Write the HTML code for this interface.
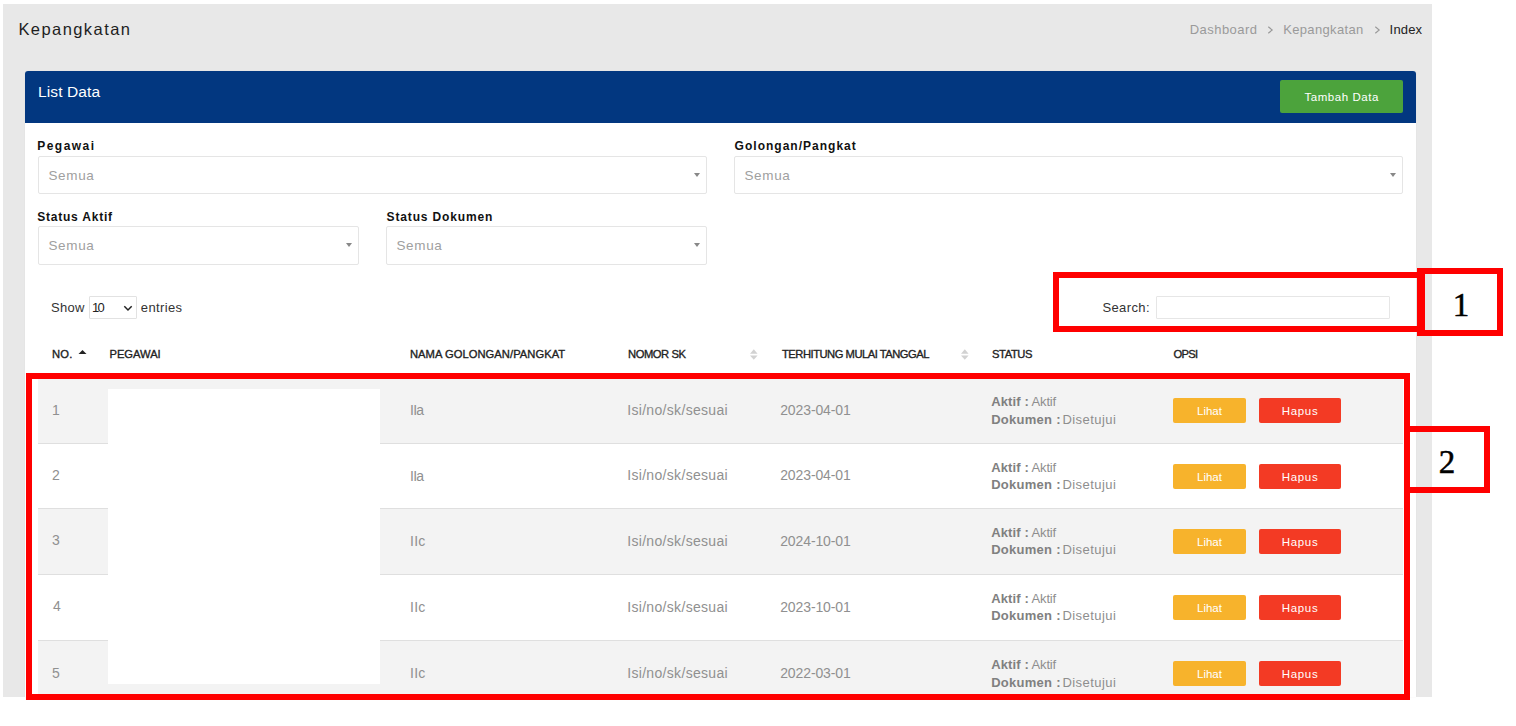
<!DOCTYPE html>
<html><head><meta charset="utf-8">
<style>
*{box-sizing:border-box;margin:0;padding:0}
html,body{width:1516px;height:726px;overflow:hidden;background:#fff;font-family:"Liberation Sans",sans-serif}
.a{position:absolute}
.t{position:absolute;white-space:nowrap;line-height:20px}
</style></head><body>
<div class="a" style="left:3px;top:4px;width:1429px;height:693px;background:#e8e8e8"></div>
<div id="title" class="t" style="left:18.40px;top:19.00px;font-size:16.5px;color:#1e1e1e;letter-spacing:1.430px;">Kepangkatan</div>
<div id="bc1" class="t" style="left:1189.80px;top:20.00px;font-size:13px;color:#9a9a9a;letter-spacing:0.438px;">Dashboard</div>
<div id="bc2" class="t" style="left:1283.20px;top:20.00px;font-size:13px;color:#9a9a9a;letter-spacing:0.340px;">Kepangkatan</div>
<div id="bc3" class="t" style="left:1389.60px;top:20.00px;font-size:13px;color:#222;letter-spacing:0.175px;">Index</div>
<svg class="a" style="left:1266.5px;top:25px" width="8" height="10" viewBox="0 0 8 10"><polyline points="1.3,1.8 5.2,5 1.3,8.2" fill="none" stroke="#999" stroke-width="1.1"/></svg>
<svg class="a" style="left:1373.8px;top:25px" width="8" height="10" viewBox="0 0 8 10"><polyline points="1.3,1.8 5.2,5 1.3,8.2" fill="none" stroke="#999" stroke-width="1.1"/></svg>
<div class="a" style="left:25px;top:71px;width:1391px;height:626px;background:#fff;border-radius:3px 3px 0 0;box-shadow:0 0 1px rgba(0,0,0,0.12)"></div>
<div class="a" style="left:25px;top:71px;width:1391px;height:52px;background:#023780;border-radius:3px 3px 0 0"></div>
<div id="listdata" class="t" style="left:38.00px;top:82.00px;font-size:15.5px;color:#fff;letter-spacing:0.125px;">List Data</div>
<div class="a" style="left:1280px;top:80px;width:123px;height:33px;background:#4ca33c;border-radius:2px"></div>
<div id="tambah" class="t" style="left:1304.40px;top:87.00px;font-size:11.5px;color:#fff;letter-spacing:0.560px;">Tambah Data</div>
<div id="lbl_peg" class="t" style="left:37.20px;top:136.00px;font-size:12px;color:#111;letter-spacing:1.483px;font-weight:bold;">Pegawai</div>
<div id="lbl_gol" class="t" style="left:734.60px;top:136.00px;font-size:12px;color:#111;letter-spacing:1.013px;font-weight:bold;">Golongan/Pangkat</div>
<div id="lbl_sa" class="t" style="left:37.20px;top:207.00px;font-size:12px;color:#111;letter-spacing:0.782px;font-weight:bold;">Status Aktif</div>
<div id="lbl_sd" class="t" style="left:386.60px;top:207.00px;font-size:12px;color:#111;letter-spacing:0.846px;font-weight:bold;">Status Dokumen</div>
<div class="a" style="left:38px;top:156px;width:669px;height:38px;border:1px solid #e5e5e5;border-radius:2px;background:#fff"></div>
<div id="semua0" class="t" style="left:48.40px;top:166.00px;font-size:13.5px;color:#a0a0a0;letter-spacing:0.675px;">Semua</div>
<div class="a" style="left:693.5px;top:172.5px;width:0;height:0;border-style:solid;border-width:4px 3.5px 0 3.5px;border-color:#888 transparent transparent transparent"></div>
<div class="a" style="left:734px;top:156px;width:669px;height:38px;border:1px solid #e5e5e5;border-radius:2px;background:#fff"></div>
<div id="semua1" class="t" style="left:744.40px;top:166.00px;font-size:13.5px;color:#a0a0a0;letter-spacing:0.675px;">Semua</div>
<div class="a" style="left:1389.5px;top:172.5px;width:0;height:0;border-style:solid;border-width:4px 3.5px 0 3.5px;border-color:#888 transparent transparent transparent"></div>
<div class="a" style="left:38px;top:226px;width:321px;height:39px;border:1px solid #e5e5e5;border-radius:2px;background:#fff"></div>
<div id="semua2" class="t" style="left:48.40px;top:236.00px;font-size:13.5px;color:#a0a0a0;letter-spacing:0.675px;">Semua</div>
<div class="a" style="left:345.5px;top:242.5px;width:0;height:0;border-style:solid;border-width:4px 3.5px 0 3.5px;border-color:#888 transparent transparent transparent"></div>
<div class="a" style="left:386px;top:226px;width:321px;height:39px;border:1px solid #e5e5e5;border-radius:2px;background:#fff"></div>
<div id="semua3" class="t" style="left:396.40px;top:236.00px;font-size:13.5px;color:#a0a0a0;letter-spacing:0.675px;">Semua</div>
<div class="a" style="left:693.5px;top:242.5px;width:0;height:0;border-style:solid;border-width:4px 3.5px 0 3.5px;border-color:#888 transparent transparent transparent"></div>
<div id="show" class="t" style="left:51.00px;top:298.00px;font-size:13px;color:#333;letter-spacing:0.267px;">Show</div>
<div class="a" style="left:89px;top:296px;width:48px;height:23px;border:1px solid #e2e2e2;border-radius:1px;background:#fff"></div>
<div id="ten" class="t" style="left:92.00px;top:298.00px;font-size:13px;color:#222;letter-spacing:-1.700px;">10</div>
<svg class="a" style="left:123px;top:305px" width="10" height="7" viewBox="0 0 10 7"><polyline points="1.3,1.3 5,5 8.7,1.3" fill="none" stroke="#222" stroke-width="1.5"/></svg>
<div id="entries" class="t" style="left:140.80px;top:298.00px;font-size:13px;color:#333;letter-spacing:0.383px;">entries</div>
<div id="search" class="t" style="left:1102.40px;top:298.00px;font-size:13px;color:#333;letter-spacing:0.383px;">Search:</div>
<div class="a" style="left:1156px;top:296px;width:234px;height:23px;border:1px solid #e6e6e6;border-radius:1px;background:#fff"></div>
<div id="h_no" class="t" style="left:52.00px;top:344.00px;font-size:11.2px;color:#222;letter-spacing:0.200px;-webkit-text-stroke:0.35px #222">NO.</div>
<div id="h_peg" class="t" style="left:109.50px;top:344.00px;font-size:11.2px;color:#222;letter-spacing:-0.033px;-webkit-text-stroke:0.35px #222">PEGAWAI</div>
<div id="h_gol" class="t" style="left:410.00px;top:344.00px;font-size:11.2px;color:#222;letter-spacing:0.040px;-webkit-text-stroke:0.35px #222">NAMA GOLONGAN/PANGKAT</div>
<div id="h_sk" class="t" style="left:628.00px;top:344.00px;font-size:11.2px;color:#222;letter-spacing:-0.429px;-webkit-text-stroke:0.35px #222">NOMOR SK</div>
<div id="h_tgl" class="t" style="left:782.00px;top:344.00px;font-size:11.2px;color:#222;letter-spacing:-0.482px;-webkit-text-stroke:0.35px #222">TERHITUNG MULAI TANGGAL</div>
<div id="h_st" class="t" style="left:992.00px;top:344.00px;font-size:11.2px;color:#222;letter-spacing:-0.400px;-webkit-text-stroke:0.35px #222">STATUS</div>
<div id="h_op" class="t" style="left:1173.50px;top:344.00px;font-size:11.2px;color:#222;letter-spacing:-0.667px;-webkit-text-stroke:0.35px #222">OPSI</div>
<svg class="a" style="left:78px;top:349px" width="10" height="6" viewBox="0 0 10 6"><polygon points="0.5,5 4.5,1 8.5,5" fill="#222"/></svg>
<svg class="a" style="left:749.5px;top:349px" width="8" height="11" viewBox="0 0 8 11"><polygon points="0,4.8 3.8,0.2 7.6,4.8" fill="#d2d2d2"/><polygon points="0,6.4 3.8,10.8 7.6,6.4" fill="#d2d2d2"/></svg>
<svg class="a" style="left:960.5px;top:349px" width="8" height="11" viewBox="0 0 8 11"><polygon points="0,4.8 3.8,0.2 7.6,4.8" fill="#d2d2d2"/><polygon points="0,6.4 3.8,10.8 7.6,6.4" fill="#d2d2d2"/></svg>
<div class="a" style="left:0;top:0;width:1516px;height:697px;overflow:hidden">
<div class="a" style="left:38px;top:378px;width:1365px;height:65px;background:#f3f3f3"></div>
<div id="r0_no" class="t" style="left:52.00px;top:400.00px;font-size:14px;color:#909090;letter-spacing:0.000px;">1</div>
<div id="r0_gol" class="t" style="left:410.00px;top:400.00px;font-size:14px;color:#909090;letter-spacing:-0.750px;">IIa</div>
<div id="r0_sk" class="t" style="left:627.20px;top:400.00px;font-size:14px;color:#909090;letter-spacing:0.320px;">Isi/no/sk/sesuai</div>
<div id="r0_dt" class="t" style="left:780.20px;top:400.00px;font-size:14px;color:#909090;letter-spacing:-0.111px;">2023-04-01</div>
<div id="r0_a1" class="t" style="left:991.20px;top:392.00px;font-size:13px;color:#808080;letter-spacing:0.133px;font-weight:bold;">Aktif :</div>
<div id="r0_a2" class="t" style="left:1031.60px;top:392.00px;font-size:13px;color:#8e8e8e;letter-spacing:-0.175px;">Aktif</div>
<div id="r0_d1" class="t" style="left:991.20px;top:410.00px;font-size:13px;color:#808080;letter-spacing:0.263px;font-weight:bold;">Dokumen :</div>
<div id="r0_d2" class="t" style="left:1062.40px;top:410.00px;font-size:13px;color:#8e8e8e;letter-spacing:0.463px;">Disetujui</div>
<div class="a" style="left:1173px;top:398px;width:73px;height:25px;background:#f7b32c;border-radius:2px"></div>
<div class="a" style="left:1259px;top:398px;width:82px;height:25px;background:#f33a24;border-radius:2px"></div>
<div id="r0_lh" class="t" style="left:1197.00px;top:401.00px;font-size:11.5px;color:#fff;letter-spacing:0.000px;">Lihat</div>
<div id="r0_hp" class="t" style="left:1281.80px;top:401.00px;font-size:11.5px;color:#fff;letter-spacing:0.650px;">Hapus</div>
<div class="a" style="left:38px;top:443px;width:1365px;height:65px;background:#fff"></div>
<div class="a" style="left:38px;top:443px;width:1365px;height:1px;background:#dfdfdf"></div>
<div id="r1_no" class="t" style="left:52.00px;top:465.00px;font-size:14px;color:#909090;letter-spacing:0.000px;">2</div>
<div id="r1_gol" class="t" style="left:410.00px;top:466.00px;font-size:14px;color:#909090;letter-spacing:-0.750px;">IIa</div>
<div id="r1_sk" class="t" style="left:627.20px;top:465.00px;font-size:14px;color:#909090;letter-spacing:0.320px;">Isi/no/sk/sesuai</div>
<div id="r1_dt" class="t" style="left:780.20px;top:465.00px;font-size:14px;color:#909090;letter-spacing:-0.111px;">2023-04-01</div>
<div id="r1_a1" class="t" style="left:991.20px;top:458.00px;font-size:13px;color:#808080;letter-spacing:0.133px;font-weight:bold;">Aktif :</div>
<div id="r1_a2" class="t" style="left:1031.60px;top:458.00px;font-size:13px;color:#8e8e8e;letter-spacing:-0.175px;">Aktif</div>
<div id="r1_d1" class="t" style="left:991.20px;top:475.00px;font-size:13px;color:#808080;letter-spacing:0.263px;font-weight:bold;">Dokumen :</div>
<div id="r1_d2" class="t" style="left:1062.40px;top:475.00px;font-size:13px;color:#8e8e8e;letter-spacing:0.463px;">Disetujui</div>
<div class="a" style="left:1173px;top:464px;width:73px;height:25px;background:#f7b32c;border-radius:2px"></div>
<div class="a" style="left:1259px;top:464px;width:82px;height:25px;background:#f33a24;border-radius:2px"></div>
<div id="r1_lh" class="t" style="left:1197.00px;top:467.00px;font-size:11.5px;color:#fff;letter-spacing:0.000px;">Lihat</div>
<div id="r1_hp" class="t" style="left:1281.80px;top:467.00px;font-size:11.5px;color:#fff;letter-spacing:0.650px;">Hapus</div>
<div class="a" style="left:38px;top:508px;width:1365px;height:66px;background:#f3f3f3"></div>
<div class="a" style="left:38px;top:508px;width:1365px;height:1px;background:#dfdfdf"></div>
<div id="r2_no" class="t" style="left:52.00px;top:530.00px;font-size:14px;color:#909090;letter-spacing:0.000px;">3</div>
<div id="r2_gol" class="t" style="left:410.00px;top:531.00px;font-size:14px;color:#909090;letter-spacing:0.250px;">IIc</div>
<div id="r2_sk" class="t" style="left:627.20px;top:531.00px;font-size:14px;color:#909090;letter-spacing:0.320px;">Isi/no/sk/sesuai</div>
<div id="r2_dt" class="t" style="left:780.20px;top:531.00px;font-size:14px;color:#909090;letter-spacing:-0.111px;">2024-10-01</div>
<div id="r2_a1" class="t" style="left:991.20px;top:523.00px;font-size:13px;color:#808080;letter-spacing:0.133px;font-weight:bold;">Aktif :</div>
<div id="r2_a2" class="t" style="left:1031.60px;top:523.00px;font-size:13px;color:#8e8e8e;letter-spacing:-0.175px;">Aktif</div>
<div id="r2_d1" class="t" style="left:991.20px;top:540.00px;font-size:13px;color:#808080;letter-spacing:0.263px;font-weight:bold;">Dokumen :</div>
<div id="r2_d2" class="t" style="left:1062.40px;top:540.00px;font-size:13px;color:#8e8e8e;letter-spacing:0.463px;">Disetujui</div>
<div class="a" style="left:1173px;top:529px;width:73px;height:25px;background:#f7b32c;border-radius:2px"></div>
<div class="a" style="left:1259px;top:529px;width:82px;height:25px;background:#f33a24;border-radius:2px"></div>
<div id="r2_lh" class="t" style="left:1197.00px;top:532.00px;font-size:11.5px;color:#fff;letter-spacing:0.000px;">Lihat</div>
<div id="r2_hp" class="t" style="left:1281.80px;top:532.00px;font-size:11.5px;color:#fff;letter-spacing:0.650px;">Hapus</div>
<div class="a" style="left:38px;top:574px;width:1365px;height:66px;background:#fff"></div>
<div class="a" style="left:38px;top:574px;width:1365px;height:1px;background:#dfdfdf"></div>
<div id="r3_no" class="t" style="left:53.00px;top:596.00px;font-size:14px;color:#909090;letter-spacing:0.000px;">4</div>
<div id="r3_gol" class="t" style="left:410.00px;top:597.00px;font-size:14px;color:#909090;letter-spacing:0.250px;">IIc</div>
<div id="r3_sk" class="t" style="left:627.20px;top:597.00px;font-size:14px;color:#909090;letter-spacing:0.320px;">Isi/no/sk/sesuai</div>
<div id="r3_dt" class="t" style="left:780.20px;top:597.00px;font-size:14px;color:#909090;letter-spacing:-0.111px;">2023-10-01</div>
<div id="r3_a1" class="t" style="left:991.20px;top:589.00px;font-size:13px;color:#808080;letter-spacing:0.133px;font-weight:bold;">Aktif :</div>
<div id="r3_a2" class="t" style="left:1031.60px;top:589.00px;font-size:13px;color:#8e8e8e;letter-spacing:-0.175px;">Aktif</div>
<div id="r3_d1" class="t" style="left:991.20px;top:606.00px;font-size:13px;color:#808080;letter-spacing:0.263px;font-weight:bold;">Dokumen :</div>
<div id="r3_d2" class="t" style="left:1062.40px;top:606.00px;font-size:13px;color:#8e8e8e;letter-spacing:0.463px;">Disetujui</div>
<div class="a" style="left:1173px;top:595px;width:73px;height:25px;background:#f7b32c;border-radius:2px"></div>
<div class="a" style="left:1259px;top:595px;width:82px;height:25px;background:#f33a24;border-radius:2px"></div>
<div id="r3_lh" class="t" style="left:1197.00px;top:598.00px;font-size:11.5px;color:#fff;letter-spacing:0.000px;">Lihat</div>
<div id="r3_hp" class="t" style="left:1281.80px;top:598.00px;font-size:11.5px;color:#fff;letter-spacing:0.650px;">Hapus</div>
<div class="a" style="left:38px;top:640px;width:1365px;height:66px;background:#f3f3f3"></div>
<div class="a" style="left:38px;top:640px;width:1365px;height:1px;background:#dfdfdf"></div>
<div id="r4_no" class="t" style="left:52.00px;top:663.00px;font-size:14px;color:#909090;letter-spacing:0.000px;">5</div>
<div id="r4_gol" class="t" style="left:410.00px;top:663.00px;font-size:14px;color:#909090;letter-spacing:0.250px;">IIc</div>
<div id="r4_sk" class="t" style="left:627.20px;top:663.00px;font-size:14px;color:#909090;letter-spacing:0.320px;">Isi/no/sk/sesuai</div>
<div id="r4_dt" class="t" style="left:780.20px;top:663.00px;font-size:14px;color:#909090;letter-spacing:-0.111px;">2022-03-01</div>
<div id="r4_a1" class="t" style="left:991.20px;top:655.00px;font-size:13px;color:#808080;letter-spacing:0.133px;font-weight:bold;">Aktif :</div>
<div id="r4_a2" class="t" style="left:1031.60px;top:655.00px;font-size:13px;color:#8e8e8e;letter-spacing:-0.175px;">Aktif</div>
<div id="r4_d1" class="t" style="left:991.20px;top:673.00px;font-size:13px;color:#808080;letter-spacing:0.263px;font-weight:bold;">Dokumen :</div>
<div id="r4_d2" class="t" style="left:1062.40px;top:673.00px;font-size:13px;color:#8e8e8e;letter-spacing:0.463px;">Disetujui</div>
<div class="a" style="left:1173px;top:661px;width:73px;height:25px;background:#f7b32c;border-radius:2px"></div>
<div class="a" style="left:1259px;top:661px;width:82px;height:25px;background:#f33a24;border-radius:2px"></div>
<div id="r4_lh" class="t" style="left:1197.00px;top:664.00px;font-size:11.5px;color:#fff;letter-spacing:0.000px;">Lihat</div>
<div id="r4_hp" class="t" style="left:1281.80px;top:664.00px;font-size:11.5px;color:#fff;letter-spacing:0.650px;">Hapus</div>
</div>
<div class="a" style="left:108px;top:389px;width:272px;height:295px;background:#fff"></div>
<div class="a" style="left:26px;top:373px;width:1384px;height:327px;border:6px solid #ff0000"></div>
<div class="a" style="left:1053px;top:272px;width:370px;height:60px;border:6px solid #ff0000"></div>
<div class="a" style="left:1417px;top:268px;width:86px;height:68px;border:6px solid #ff0000;border-left-width:8px"></div>
<div class="a" style="left:1425px;top:277px;width:72px;height:56px;font-family:'Liberation Serif',serif;font-size:33px;line-height:56px;text-align:center;color:#000;-webkit-text-stroke:0.5px #000">1</div>
<div class="a" style="left:1404px;top:426px;width:86px;height:67px;border:6px solid #ff0000"></div>
<div class="a" style="left:1410px;top:435px;width:74px;height:55px;font-family:'Liberation Serif',serif;font-size:33px;line-height:55px;text-align:center;color:#000;-webkit-text-stroke:0.5px #000">2</div>
</body></html>
